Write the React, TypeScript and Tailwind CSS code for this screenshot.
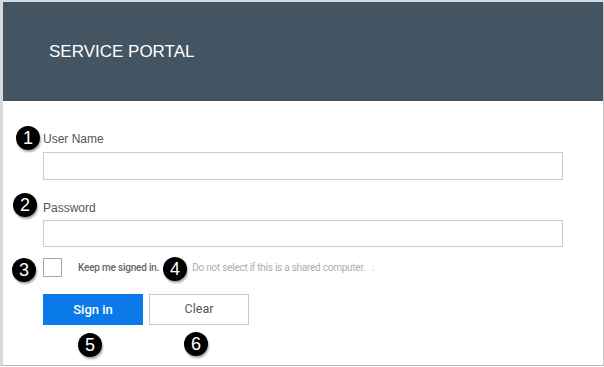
const badges = [
  { n: 1, cls: 'left-[13px] top-[124px]' },
  { n: 2, cls: 'left-[10px] top-[191px]' },
  { n: 3, cls: 'left-[9px] top-[256px]' },
  { n: 4, cls: 'left-[160px] top-[255px]' },
  { n: 5, cls: 'left-[75px] top-[331px]' },
  { n: 6, cls: 'left-[181px] top-[330px]' },
];

function Badge({ n, cls }: { n: number; cls: string }) {
  return (
    <div
      className={`absolute ${cls} w-[24px] h-[24px] rounded-full bg-black text-white flex items-center justify-center text-[18px] leading-none shadow-[1px_2px_2px_rgba(0,0,0,0.35)]`}
      style={{ fontFamily: '"Liberation Sans", Arial, sans-serif' }}
    >
      {n}
    </div>
  );
}

export default function App() {
  return (
    <div className="w-[604px] h-[367px] bg-white" style={{ fontFamily: '"Liberation Sans", Arial, sans-serif' }}>
      <div className="relative w-[604px] h-[366px] border-t-2 border-l-[3px] border-r border-b border-t-[#d7dbdf] border-l-[#d7dbdf] border-r-[#c6c6c6] border-b-[#b8b8b8] bg-white">
        {/* Header */}
        <div className="h-[99px] bg-[#435563] flex items-center pl-[46px]">
          <h1 className="text-[17px] text-white">SERVICE PORTAL</h1>
        </div>

        {/* Form */}
        <div className="pl-[40px] pt-[30px]">
          <label className="block text-[12px] leading-4 text-[#555]">User Name</label>
          <input className="mt-[5px] block w-[520px] h-[28px] border border-[#cccccc] bg-white outline-none" />

          <label className="block mt-[20px] text-[12px] leading-4 text-[#555]">Password</label>
          <input type="password" className="mt-[4px] block w-[520px] h-[27px] border border-[#cccccc] bg-white outline-none" />

          <div className="mt-[11px] flex items-center h-[19px]" style={{ fontFamily: 'Roboto, "Liberation Sans", sans-serif' }}>
            <div className="w-[19px] h-[19px] border border-[#a8a8a8] bg-white" />
            <span className="ml-[16px] text-[10px] font-medium tracking-[-0.2px] text-[#666]">Keep me signed in.</span>
            <span className="ml-[33px] text-[10px] tracking-[-0.25px] text-[#adadad]">Do not select if this is a shared computer.</span>
            <span className="ml-[7px] text-[8px] text-[#bbbbbb]">;</span>
          </div>

          <div className="mt-[17px] flex gap-[6px]" style={{ fontFamily: 'Roboto, "Liberation Sans", sans-serif' }}>
            <button className="w-[100px] h-[31px] bg-[#0a7ae8] text-white text-[13px] font-medium">Sign in</button>
            <button className="w-[100px] h-[31px] bg-white border border-[#c8c8c8] text-[#555] text-[12.5px]">Clear</button>
          </div>
        </div>

        {badges.map((b) => (
          <Badge key={b.n} n={b.n} cls={b.cls} />
        ))}
      </div>
    </div>
  );
}
